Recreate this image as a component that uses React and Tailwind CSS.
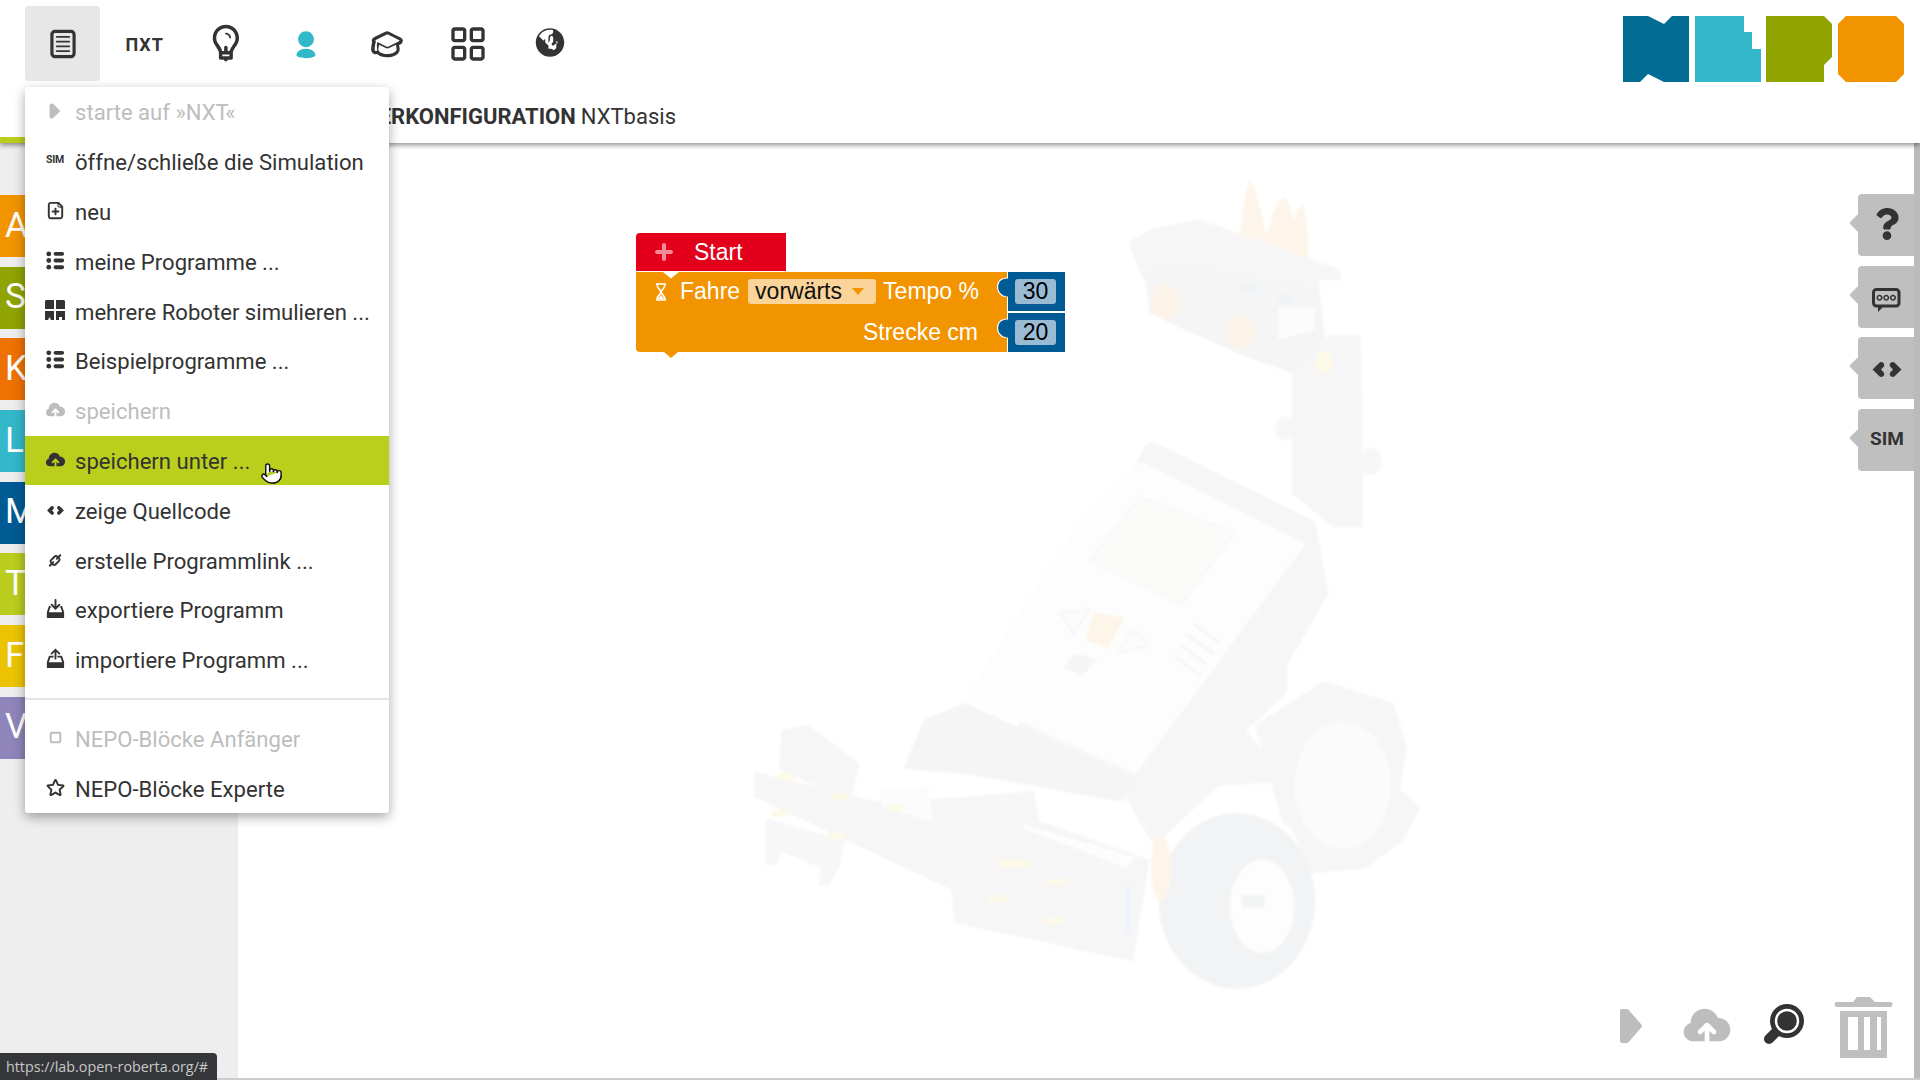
import React from "react";
import {
  TiDocumentText, TiLightbulb, TiUser, TiMortarBoard, TiThLargeOutline, TiWorld,
  TiCloudStorage, TiCode, TiLink, TiStarOutline, TiThList, TiDocumentAdd,
  TiMediaPlay, TiMediaStopOutline, TiDownload, TiUpload, TiMessageTyping,
} from "react-icons/ti";
import { FaQuestion } from "react-icons/fa";
import { Pointer } from "lucide-react";

function MultiIcon() {
  return (
    <svg width="20" height="20" viewBox="0 0 20 20" fill="currentColor">
      <path d="M1 0 H9 V9 H0 V1 Z M11 0 H19 L20 1 V9 H11 Z" />
      <path d="M0 11 H9 V20 H6 L4.5 17 L3 20 H0 Z M11 11 H20 V20 H17 V17 H14 V20 H11 Z" />
    </svg>
  );
}

const menuTop = [
  { icon: <TiMediaPlay size={26} />, label: "starte auf »NXT«", off: true },
  { icon: <span className="text-[10.5px] font-bold leading-none tracking-tight">SIM</span>, label: "öffne/schließe die Simulation" },
  { icon: <TiDocumentAdd size={23} />, label: "neu" },
  { icon: <TiThList size={23} />, label: "meine Programme ..." },
  { icon: <MultiIcon />, label: "mehrere Roboter simulieren ..." },
  { icon: <TiThList size={23} />, label: "Beispielprogramme ..." },
  { icon: <TiCloudStorage size={23} />, label: "speichern", off: true },
  { icon: <TiCloudStorage size={23} />, label: "speichern unter ...", hover: true },
  { icon: <TiCode size={21} />, label: "zeige Quellcode" },
  { icon: <TiLink size={21} />, label: "erstelle Programmlink ..." },
  { icon: <TiDownload size={23} />, label: "exportiere Programm" },
  { icon: <TiUpload size={23} />, label: "importiere Programm ..." },
];

const menuBottom = [
  { icon: <TiMediaStopOutline size={23} />, label: "NEPO-Blöcke Anfänger", off: true },
  { icon: <TiStarOutline size={23} />, label: "NEPO-Blöcke Experte" },
];

const categories = [
  ["Aktion", "bg-[#f29400]"],
  ["Sensoren", "bg-[#8fa402]"],
  ["Kontrolle", "bg-[#ee7203]"],
  ["Logik", "bg-[#33b8ca]"],
  ["Mathematik", "bg-[#005a94]"],
  ["Text", "bg-[#bacc1e]"],
  ["Farben", "bg-[#ebc300]"],
  ["Variablen", "bg-[#9085ba]"],
];

function MenuRow({ icon, label, off, hover }) {
  return (
    <div
      className={`relative flex h-[49.8px] items-center whitespace-nowrap text-[22.1px] ${
        hover ? "bg-[#bacf1b]" : ""
      } ${off ? "text-[#bdbdbd]" : "text-[#333333]"}`}
    >
      <span className="flex w-[51px] -translate-y-[1px] justify-center pl-[9px]">{icon}</span>
      <span className="-ml-px translate-y-[0.5px]">{label}</span>
      {hover && (
        <Pointer
          size={23}
          fill="#ffffff"
          stroke="#111111"
          strokeWidth={1.5}
          className="absolute left-[235px] top-[26px]"
        />
      )}
    </div>
  );
}

function Logo() {
  return (
    <svg width="281" height="66" viewBox="0 0 281 66" className="block">
      <polygon fill="#006c93" points="0,0 25,0 41,8 49,0 66,0 66,66 41,66 25,58 17,66 0,66" />
      <polygon fill="#33b8ca" transform="translate(72 0)" points="0,0 49,0 49,16 57,16 57,33 66,33 66,66 0,66" />
      <polygon fill="#90a400" transform="translate(143 0)" points="0,0 58,0 66,8 66,41 58,49 58,66 0,66" />
      <polygon fill="#f29400" transform="translate(215 0)" points="8,0 58,0 66,8 66,58 58,66 8,66 0,58 0,8" />
    </svg>
  );
}

function Robot() {
  return (
    <svg
      viewBox="0 0 1565 1565"
      preserveAspectRatio="none"
      className="absolute left-[502px] top-[27px] h-[860px] w-[720px] blur-[0.8px]"
    >
      <path fill="#fdf5ea" d="M1085 155 C1090 90 1095 30 1110 20 C1125 30 1135 90 1145 120 C1155 80 1170 45 1185 50 C1195 60 1200 80 1205 95 C1210 70 1222 55 1228 70 C1232 100 1236 140 1238 178 Z" />
      <polygon fill="#f6f6f6" points="845,130 900,105 1000,90 1300,180 1310,200 1260,200 1260,225 930,175 880,205 850,145" />
      <polygon fill="#f5f5f5" points="880,200 930,170 1260,220 1275,330 1200,370 1100,340 950,285 890,260" />
      <circle cx="925" cy="240" r="32" fill="#fcf4e9" />
      <circle cx="1090" cy="295" r="32" fill="#fcf4e9" />
      <polygon fill="#fcfcfc" points="1170,250 1250,250 1250,290 1170,310" />
      <rect x="1090" y="205" width="30" height="20" fill="#eef3f8" />
      <rect x="1170" y="225" width="30" height="20" fill="#eef3f8" />
      <polygon fill="#f6f6f6" points="1200,370 1280,300 1350,300 1355,650 1290,650 1200,590" />
      <circle cx="1185" cy="470" r="22" fill="#f7f7f7" />
      <circle cx="1370" cy="530" r="25" fill="#f7f7f7" />
      <circle cx="1270" cy="350" r="20" fill="#fcf9e8" />
      <polygon fill="#f6f6f6" points="880,500 900,495 1250,640 1280,770 1190,900 1190,950 1100,1020 1170,1090 1160,1115 1040,1120 900,1230 830,1130 600,1020" />
      <polygon fill="#f5f5f5" points="355,1090 400,1000 490,970 860,1110 830,1150 500,1100" />
      <polygon fill="#fdfdfd" points="870,530 1230,680 860,1100 490,960 720,660" />
      <polygon fill="#fbfbf9" stroke="#f6f6f6" strokeWidth="3" points="870,595 1075,660 960,790 760,710" />
      <polygon fill="#fdf5e8" points="770,805 835,815 800,870 750,855" />
      <polygon fill="#f5f5f5" points="730,880 775,890 745,920 705,905" />
      <polygon fill="#fcfcfc" stroke="#f5f5f5" strokeWidth="3" points="760,800 695,805 725,845" />
      <polygon fill="#fcfcfc" stroke="#f5f5f5" strokeWidth="3" points="850,835 890,865 820,880" />
      <path stroke="#f5f5f5" strokeWidth="5" fill="none" d="M985 825 L1040 860 M970 845 L1030 880 M960 865 L1015 900 M945 885 L1000 920" />
      <polygon fill="#f6f6f6" points="30,1095 300,1150 500,1140 890,1255 855,1440 465,1370 460,1310 270,1235 30,1140" />
      <polygon fill="#f6f6f6" points="90,1020 150,1010 260,1080 240,1150 85,1090" />
      <polygon fill="#f7f7f7" points="55,1180 230,1220 215,1270 190,1305 170,1300 175,1270 90,1240 80,1265 55,1265" />
      <polygon fill="#f6f6f6" points="500,1140 640,1130 650,1180 520,1220" />
      <polygon fill="#fcfcfc" points="300,1130 410,1120 420,1185 310,1160" />
      <polygon fill="#fdfdfd" points="610,1190 860,1250 840,1270 620,1200" />
      <polygon fill="#f6f6f6" points="1120,1010 1270,930 1420,970 1450,1050 1420,1200 1300,1240 1180,1190" />
      <polygon fill="#f6f6f6" points="1400,1100 1480,1160 1440,1220 1360,1270 1240,1280 1200,1200" />
      <ellipse cx="1310" cy="1120" rx="105" ry="115" fill="#fbfbfb" />
      <ellipse cx="1080" cy="1330" rx="170" ry="160" fill="#f2f3f4" />
      <ellipse cx="1135" cy="1340" rx="70" ry="85" fill="#fdfdfd" />
      <rect x="1090" y="1320" width="50" height="22" fill="#f2f3f4" />
      <ellipse cx="915" cy="1270" rx="22" ry="60" fill="#fdf5ea" />
      <rect x="838" y="1305" width="12" height="85" fill="#edf2f9" />
      <g fill="#fdf9e8">
        <rect x="85" y="1097" width="35" height="12" />
        <rect x="200" y="1135" width="35" height="12" />
        <rect x="70" y="1165" width="35" height="12" />
        <rect x="190" y="1205" width="35" height="12" />
        <rect x="320" y="1155" width="35" height="12" />
        <rect x="560" y="1255" width="70" height="14" />
        <rect x="670" y="1290" width="40" height="12" />
        <rect x="540" y="1320" width="40" height="12" />
        <rect x="660" y="1360" width="40" height="12" />
      </g>
    </svg>
  );
}

function BlueBox({ value }) {
  return (
    <div className="relative flex h-[39px] w-[57px] items-center justify-center bg-[#005a94]">
      <svg width="13" height="21" viewBox="0 0 13 21" className="absolute left-[-12px] top-[5px]">
        <path d="M12 1 C7 1 3 3 2 7 C1 11 2 16 7 19 L12 19.5 Z" fill="#005a94" />
        <path d="M12 1 C7 1 3 3 2 7 C1 11 2 16 7 19 L10 19.5" fill="none" stroke="#ffffff" strokeWidth="1.2" />
      </svg>
      <span className="flex h-[25px] w-[41px] -translate-x-px items-center justify-center rounded-[3px] bg-[#99bbd4] text-black">
        {value}
      </span>
    </div>
  );
}

function Blocks() {
  return (
    <div className="absolute left-[398px] top-[90px] w-[430px] whitespace-nowrap font-['Liberation_Sans',Arial,sans-serif] text-[23px] leading-none text-white">
      <div className="flex h-[38px] w-[150px] items-center rounded-tl-[4px] bg-[#e2001a] pl-[19px]">
        <svg width="18" height="18" viewBox="0 0 18 18">
          <path d="M9 2 V16 M2 9 H16" stroke="#f48b99" strokeWidth="4" strokeLinecap="round" />
        </svg>
        <span className="ml-[21px]">Start</span>
      </div>
      <div className="relative mt-px flex">
        <svg width="16" height="8" viewBox="0 0 16 8" className="absolute left-[27px] top-0 z-10">
          <polygon points="0,0 16,0 8,6.5" fill="#ffffff" />
        </svg>
        <div className="flex h-[80px] w-[371px] flex-col rounded-bl-[4px] bg-[#f29400] pr-[29px]">
          <div className="flex h-[39px] items-center pl-[18px]">
            <svg width="14" height="18" viewBox="0 0 14 18" className="shrink-0">
              <path d="M2 1 H12 M2 17 H12 M3 1 C3 6 7 7 7 9 C7 11 3 12 3 17 M11 1 C11 6 7 7 7 9 C7 11 11 12 11 17" fill="none" stroke="#ffffff" strokeWidth="1.6" />
              <path d="M4 16 L7 12 L10 16 Z" fill="#ffffff" />
            </svg>
            <span className="ml-[12px]">Fahre</span>
            <span className="ml-[8px] flex h-[25px] w-[128px] shrink-0 items-center rounded-[3px] bg-[#fad499] pl-[7px] text-[#111111]">
              vorwärts
              <svg width="12" height="8" viewBox="0 0 12 8" className="ml-[10px]">
                <polygon points="0,0 12,0 6,7" fill="#f29400" />
              </svg>
            </span>
            <span className="ml-[7px] shrink-0">Tempo %</span>
          </div>
          <div className="flex h-[41px] translate-y-px items-center justify-end">Strecke cm</div>
        </div>
        <div className="ml-px flex flex-col gap-[2px]">
          <BlueBox value="30" />
          <BlueBox value="20" />
        </div>
        <svg width="16" height="7" viewBox="0 0 16 7" className="absolute left-[28px] top-[80px]">
          <polygon points="0,0 14,0 7,6" fill="#f29400" />
        </svg>
      </div>
    </div>
  );
}

function SideTab({ children }) {
  return (
    <div className="relative flex h-[62px] w-[56px] items-center justify-center rounded-l-[4px] bg-[#bfbfbf] text-[#333333]">
      <span className="absolute left-[-6px] top-[22px] h-[14px] w-[14px] rotate-45 rounded-[2px] bg-[#bfbfbf]" />
      <span className="relative flex translate-x-px items-center justify-center">{children}</span>
    </div>
  );
}

export default function App() {
  return (
    <div className="relative flex h-[1080px] w-[1920px] flex-col overflow-hidden bg-white font-['Roboto',sans-serif] text-[22px] text-[#333333]">
      <header className="relative z-10 h-[143px] shrink-0 bg-white shadow-[0_2px_5px_rgba(0,0,0,0.45)]">
        <div className="flex h-[87px] items-start justify-between pl-[25px] pr-[16px] pt-[6px]">
          <nav className="flex gap-[6.2px]">
            <div className="flex h-[75px] w-[75px] items-center justify-center rounded-[3px] bg-[#e7e7e7]">
              <TiDocumentText size={38} />
            </div>
            <div className="flex h-[75px] w-[75px] items-center justify-center">
              <span className="translate-x-px translate-y-px text-[18px] font-bold leading-none tracking-[1px]">ПXT</span>
            </div>
            <div className="flex h-[75px] w-[75px] items-center justify-center">
              <TiLightbulb size={42} />
            </div>
            <div className="flex h-[75px] w-[75px] items-center justify-center text-[#33b8ca]">
              <TiUser size={38} />
            </div>
            <div className="flex h-[75px] w-[75px] items-center justify-center">
              <TiMortarBoard size={38} />
            </div>
            <div className="flex h-[75px] w-[75px] items-center justify-center">
              <TiThLargeOutline size={40} />
            </div>
            <div className="flex h-[75px] w-[75px] items-center justify-center">
              <TiWorld size={38} />
            </div>
          </nav>
          <div className="pt-[10px]">
            <Logo />
          </div>
        </div>
        <div className="flex h-[56px] w-[676px] items-start justify-end whitespace-nowrap pt-[16px] leading-[28px]">
          <b className="font-bold">ROBOTERKONFIGURATION</b>
          <span className="ml-[5px]">NXTbasis</span>
        </div>
        <div className="absolute bottom-0 left-0 h-[6px] w-[300px] bg-[#bacf1b]" />
      </header>

      <main className="flex min-h-0 flex-1 border-b-2 border-[#cccccc]">
        <aside className="flex w-[238px] shrink-0 flex-col gap-[9.7px] bg-[#eeeeee] pt-[52px]">
          {categories.map(([name, color]) => (
            <div
              key={name}
              className={`flex h-[62px] w-[120px] items-center overflow-hidden whitespace-nowrap pb-[2px] pl-[5px] text-[35px] leading-none text-white ${color}`}
            >
              {name}
            </div>
          ))}
        </aside>

        <section className="relative flex-1 border-r-[6px] border-[#bbbbbb] bg-white">
          <Robot />
          <Blocks />

          <div className="absolute right-0 top-[51px] flex flex-col gap-[9.7px]">
            <SideTab><FaQuestion size={32} className="-translate-y-px" /></SideTab>
            <SideTab><TiMessageTyping size={36} /></SideTab>
            <SideTab><TiCode size={36} /></SideTab>
            <SideTab><span className="-translate-y-[2px] text-[19px] font-bold leading-none">SIM</span></SideTab>
          </div>

          <div className="absolute bottom-[20px] right-[20px] flex items-end">
            <svg width="24" height="36" viewBox="0 0 24 36" className="mb-[14px]">
              <path d="M3 3 H8 L21 18 L8 33 H3 Z" fill="#bdbdbd" stroke="#bdbdbd" strokeWidth="4" strokeLinejoin="round" />
            </svg>
            <TiCloudStorage size={56} className="mb-[5px] ml-[36px] text-[#bdbdbd]" />
            <svg width="42" height="42" viewBox="0 0 42 42" className="mb-[13px] ml-[28px]">
              <path d="M14 28 L6 36" stroke="#333333" strokeWidth="10" strokeLinecap="round" />
              <circle cx="24" cy="18" r="17" fill="#333333" />
              <circle cx="24" cy="18" r="11" fill="none" stroke="#ffffff" strokeWidth="2.4" />
            </svg>
            <svg width="61" height="62" viewBox="0 0 61 62" className="ml-[28px]">
              <path d="M20 6 L24 1 H37 L42 6 H58 Q61 8 58 11 H3 Q0 8 3 6 Z" fill="#bfbfbf" />
              <path d="M7 15 H54 V62 H7 Z M15 21 V54 H25 V21 Z M31 21 V54 H37 V21 Z M44 21 V54 H48 V21 Z" fill="#bfbfbf" fillRule="evenodd" />
            </svg>
          </div>
        </section>
      </main>

      <div className="absolute left-[25px] top-[87px] z-20 w-[364px] rounded-[3px] bg-white shadow-[0_4px_12px_rgba(0,0,0,0.35)]">
        {menuTop.map((m) => (
          <MenuRow key={m.label} {...m} />
        ))}
        <div className="my-[13.5px] h-[2px] bg-[#e5e5e5]" />
        {menuBottom.map((m) => (
          <MenuRow key={m.label} {...m} />
        ))}
      </div>

      <div className="absolute bottom-0 left-0 z-30 flex h-[27px] w-[217px] items-center rounded-tr-[4px] bg-[#35363a] pl-[6px] font-['Open_Sans',sans-serif] text-[14.3px] text-[#c8c8c8]">
        https://lab.open-roberta.org/#
      </div>
    </div>
  );
}
